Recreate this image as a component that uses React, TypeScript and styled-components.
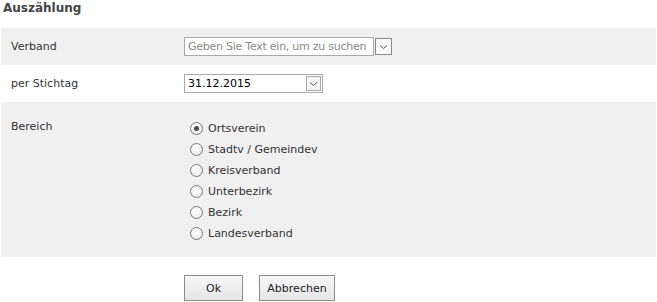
import React from "react";
import styled, { createGlobalStyle } from "styled-components";

const GlobalStyle = createGlobalStyle`
  body {
    margin: 0;
    background: #ffffff;
    font-family: "DejaVu Sans", Tahoma, sans-serif;
    font-size: 11px;
    color: #333333;
  }
`;

const PageStyled = styled.div`
  width: 657px;
  padding: 0 1px;
  box-sizing: border-box;
`;

const TitleStyled = styled.h2`
  margin: 0;
  height: 28px;
  padding-left: 2px;
  font-size: 12px;
  font-weight: bold;
  line-height: 16px;
  color: #444444;
`;

const RowStyled = styled.div<{ $shaded?: boolean; $top?: boolean }>`
  display: grid;
  grid-template-columns: 183px 1fr;
  align-items: ${(p) => (p.$top ? "start" : "center")};
  min-height: 37px;
  background: ${(p) => (p.$shaded ? "#f0f0f0" : "#ffffff")};
  padding: ${(p) => (p.$top ? "16px 0 13px" : "0")};
  box-sizing: border-box;
`;

const LabelStyled = styled.div`
  padding-left: 10px;
  line-height: 18px;
`;

const ComboStyled = styled.div<{ $width: number }>`
  display: flex;
  align-items: center;
  width: ${(p) => p.$width}px;
  height: 19px;
  box-sizing: border-box;
  border: 1px solid #a9a9a9;
  background: #ffffff;
`;

const ComboTextStyled = styled.div<{ $placeholder?: boolean }>`
  flex: 1;
  padding-left: 3px;
  white-space: nowrap;
  overflow: hidden;
  letter-spacing: ${(p) => (p.$placeholder ? "-0.25px" : "0")};
  color: ${(p) => (p.$placeholder ? "#8a8a8a" : "#000000")};
  line-height: 17px;
`;

const DropButtonStyled = styled.div`
  display: flex;
  align-items: center;
  justify-content: center;
  width: 15px;
  height: 15px;
  margin-right: 1px;
  box-sizing: border-box;
  border: 1px solid #a9a9a9;
  background: #f4f4f4;
`;

const SplitComboStyled = styled.div`
  display: flex;
  align-items: center;
  gap: 1px;
`;

const SplitButtonStyled = styled(DropButtonStyled)`
  width: 17px;
  height: 17px;
  margin: 0;
  background: #fafafa;
  border-color: #888888;
`;

const RadioListStyled = styled.div`
  display: flex;
  flex-direction: column;
`;

const RadioRowStyled = styled.label`
  display: flex;
  align-items: center;
  height: 21px;
  padding-left: 6px;
  gap: 5px;
`;

const RadioDotStyled = styled.span<{ $checked?: boolean }>`
  position: relative;
  width: 13px;
  height: 13px;
  box-sizing: border-box;
  border-radius: 50%;
  border: 1px solid #7a7a7a;
  background: radial-gradient(circle at 40% 35%, #ffffff 0%, #f2f2f2 55%, #dcdcdc 100%);

  &::after {
    content: "";
    display: ${(p) => (p.$checked ? "block" : "none")};
    position: absolute;
    left: 3px;
    top: 3px;
    width: 5px;
    height: 5px;
    border-radius: 50%;
    background: #4a4a4a;
  }
`;

const ButtonsStyled = styled.div`
  display: flex;
  gap: 16px;
  padding: 18px 0 0 183px;
`;

const ButtonStyled = styled.button<{ $width: number }>`
  width: ${(p) => p.$width}px;
  height: 26px;
  border: 1px solid #8c8c8c;
  border-radius: 0;
  background: linear-gradient(#f7f7f7, #e6e6e6);
  font-family: inherit;
  font-size: 11px;
  color: #222222;
  padding: 0;
`;

const Chevron = () => (
  <svg width="9" height="6" viewBox="0 0 9 6">
    <path d="M1 1.5 L4.5 4.5 L8 1.5" fill="none" stroke="#555" strokeWidth="1" />
  </svg>
);

const areas = [
  "Ortsverein",
  "Stadtv / Gemeindev",
  "Kreisverband",
  "Unterbezirk",
  "Bezirk",
  "Landesverband",
];

export default function App() {
  return (
    <PageStyled>
      <GlobalStyle />
      <TitleStyled>Auszählung</TitleStyled>

      <RowStyled $shaded>
        <LabelStyled>Verband</LabelStyled>
        <SplitComboStyled>
          <ComboStyled $width={190}>
            <ComboTextStyled $placeholder>Geben Sie Text ein, um zu suchen</ComboTextStyled>
          </ComboStyled>
          <SplitButtonStyled>
            <Chevron />
          </SplitButtonStyled>
        </SplitComboStyled>
      </RowStyled>

      <RowStyled>
        <LabelStyled>per Stichtag</LabelStyled>
        <ComboStyled $width={139}>
          <ComboTextStyled>31.12.2015</ComboTextStyled>
          <DropButtonStyled>
            <Chevron />
          </DropButtonStyled>
        </ComboStyled>
      </RowStyled>

      <RowStyled $shaded $top>
        <LabelStyled>Bereich</LabelStyled>
        <RadioListStyled>
          {areas.map((area, i) => (
            <RadioRowStyled key={area}>
              <RadioDotStyled $checked={i === 0} />
              {area}
            </RadioRowStyled>
          ))}
        </RadioListStyled>
      </RowStyled>

      <ButtonsStyled>
        <ButtonStyled $width={59}>Ok</ButtonStyled>
        <ButtonStyled $width={76}>Abbrechen</ButtonStyled>
      </ButtonsStyled>
    </PageStyled>
  );
}
